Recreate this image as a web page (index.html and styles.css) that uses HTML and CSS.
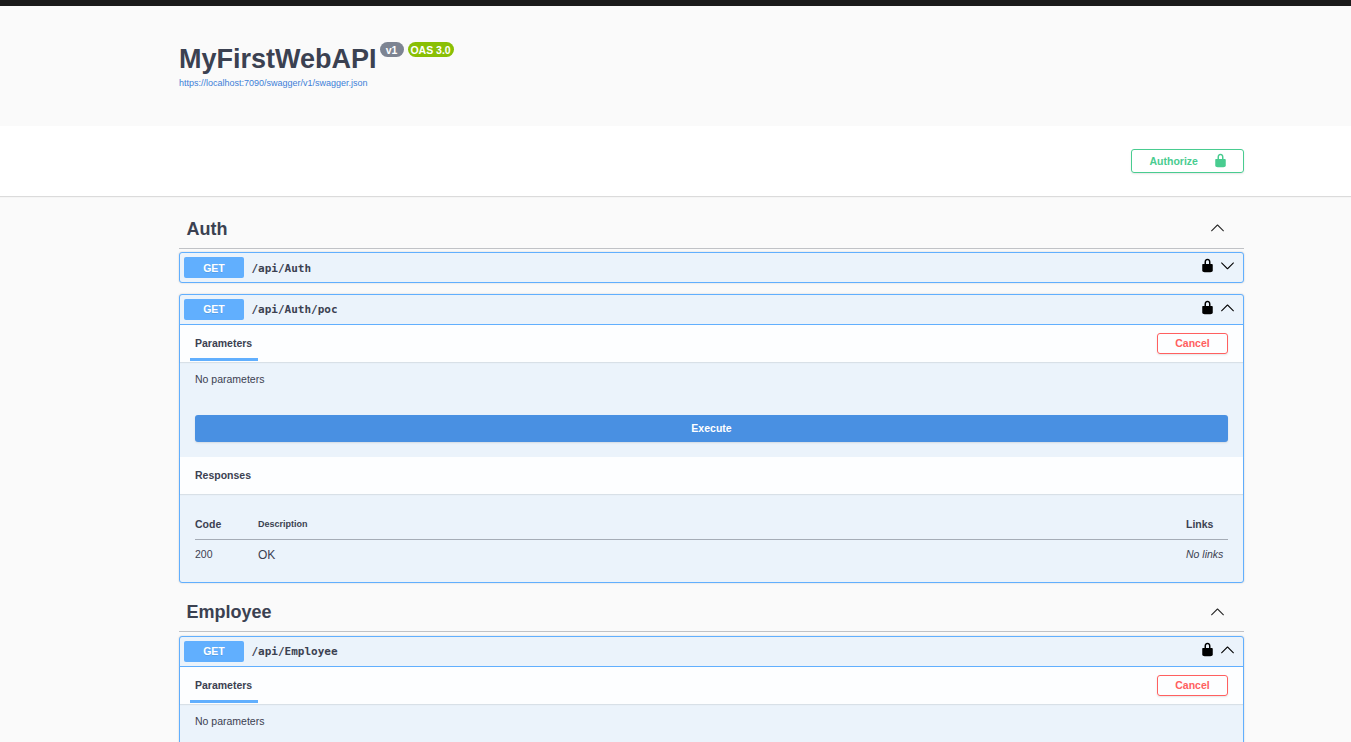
FILE: index.html
```html
<!DOCTYPE html>
<html lang="en">
<head>
<meta charset="utf-8">
<title>MyFirstWebAPI</title>
<link rel="stylesheet" href="styles.css">
</head>
<body>
<svg class="defs" aria-hidden="true">
  <symbol id="lock" viewBox="0 0 20 20"><path d="M15.8 8H14V5.6C14 2.703 12.665 1 10 1 7.334 1 6 2.703 6 5.6V8H4c-.553 0-1 .646-1 1.199V17c0 .549.428 1.139.951 1.307l1.197.387C5.672 18.861 6.55 19 7.1 19h5.8c.549 0 1.428-.139 1.951-.307l1.196-.387c.524-.167.953-.757.953-1.306V9.199C17 8.646 16.352 8 15.8 8zM12 8H8V5.199C8 3.754 8.797 3 10 3c1.203 0 2 .754 2 2.199V8z"/></symbol>
  <symbol id="up" viewBox="0 0 20 20"><path d="M17.418 14.908C17.69 15.176 18.127 15.176 18.397 14.908C18.667 14.64 18.668 14.207 18.397 13.939L10.489 6.109C10.219 5.841 9.782 5.841 9.51 6.109L1.602 13.939C1.332 14.207 1.332 14.64 1.602 14.908C1.873 15.176 2.311 15.176 2.581 14.908L10 7.767L17.418 14.908Z"/></symbol>
  <symbol id="down" viewBox="0 0 20 20"><path d="M17.418 6.109C17.69 5.841 18.127 5.841 18.397 6.109C18.667 6.377 18.668 6.81 18.397 7.078L10.489 14.908C10.219 15.176 9.782 15.176 9.51 14.908L1.602 7.078C1.332 6.81 1.332 6.377 1.602 6.109C1.873 5.841 2.311 5.841 2.581 6.109L10 13.25L17.418 6.109Z"/></symbol>
</svg>
<div class="topbar"></div>
<header class="info wrapper">
  <div class="title-row">
    <h1 class="title">MyFirstWebAPI</h1>
    <span class="badge version">v1</span>
    <span class="badge oas">OAS 3.0</span>
  </div>
  <a class="spec-link">https://localhost:7090/swagger/v1/swagger.json</a>
</header>
<section class="scheme">
  <div class="wrapper scheme-inner">
    <button class="btn authorize"><span>Authorize</span><svg class="icon"><use href="#lock"/></svg></button>
  </div>
</section>
<main class="wrapper">
  <h2 class="tag"><span>Auth</span><svg class="icon"><use href="#up"/></svg></h2>
  <article class="op collapsed">
    <div class="summary"><span class="method">GET</span><code class="path">/api/Auth</code><svg class="icon"><use href="#lock"/></svg><svg class="icon"><use href="#down"/></svg></div>
  </article>
  <article class="op">
    <div class="summary"><span class="method">GET</span><code class="path">/api/Auth/poc</code><svg class="icon"><use href="#lock"/></svg><svg class="icon"><use href="#up"/></svg></div>
    <div class="section-head parameters"><h4 class="tab">Parameters</h4><button class="btn cancel">Cancel</button></div>
    <p class="empty">No parameters</p>
    <div class="execute-wrap"><button class="execute">Execute</button></div>
    <div class="section-head"><h4 class="heading">Responses</h4></div>
    <div class="responses">
      <div class="row head"><span>Code</span><span class="small">Description</span><span>Links</span></div>
      <div class="row"><span>200</span><span class="ok">OK</span><i>No links</i></div>
    </div>
  </article>
  <h2 class="tag employee"><span>Employee</span><svg class="icon"><use href="#up"/></svg></h2>
  <article class="op">
    <div class="summary"><span class="method">GET</span><code class="path">/api/Employee</code><svg class="icon"><use href="#lock"/></svg><svg class="icon"><use href="#up"/></svg></div>
    <div class="section-head parameters"><h4 class="tab">Parameters</h4><button class="btn cancel">Cancel</button></div>
    <p class="empty">No parameters</p>
  </article>
</main>
</body>
</html>
```

FILE: styles.css
```css
* { box-sizing: border-box; }
body {
  margin: 0;
  height: 742px;
  overflow: hidden;
  background: #fafafa;
  color: #3b4151;
  font: 10.5px/14px "Liberation Sans", Arial, sans-serif;
}
h1, h2, h4, p { margin: 0; }
.defs { display: none; }
.wrapper { width: 1065px; margin-left: 179px; }
.topbar { height: 6px; background: #1b1b1b; }
.info { height: 120px; padding-top: 36px; }
.title-row { display: flex; height: 34px; align-items: flex-start; }
.title { font-size: 27px; line-height: 35px; }
.badge {
  height: 15px;
  border-radius: 8px;
  color: #fff;
  font-weight: bold;
  font-size: 10.5px;
  line-height: 16px;
  text-align: center;
}
.version { width: 24px; margin-left: 3px; background: #7d8492; }
.oas { width: 46px; margin-left: 4px; background: #89bf04; }
.spec-link { display: block; color: #4080d8; font-size: 9px; line-height: 14px; }
.scheme { height: 70px; background: #fff; box-shadow: 0 1px 1px rgba(0,0,0,.12); }
.scheme-inner { display: flex; justify-content: flex-end; padding-top: 23px; }
.btn {
  border: 1px solid;
  border-radius: 3px;
  background: transparent;
  box-shadow: 0 1px 2px rgba(0,0,0,.1);
  font: bold 10.5px/14px "Liberation Sans", Arial, sans-serif;
}
.icon { width: 15px; height: 15px; flex: none; fill: currentColor; }
.authorize {
  display: flex;
  align-items: center;
  justify-content: space-between;
  width: 113px;
  height: 24px;
  padding: 0 15px 0 17.5px;
  color: #49cc90;
}
.authorize .icon { margin-top: -1px; }
.tag {
  display: flex;
  align-items: center;
  justify-content: space-between;
  height: 38px;
  margin: 15px 0 3px;
  padding: 0 19px 2px 7.5px;
  border-bottom: 1px solid rgba(59,65,81,.3);
  font-size: 18px;
  line-height: 24px;
}
.tag .icon { margin-bottom: 2px; fill: #222; }
.tag.employee { margin: 0 0 4px; }
.tag.employee .icon { margin-bottom: 0; }
.op {
  margin-bottom: 11px;
  border: 1px solid #61affe;
  border-radius: 3px;
  background: #ebf3fb;
  box-shadow: 0 0 2px rgba(0,0,0,.19);
}
.summary { display: flex; align-items: center; height: 29px; padding: 0 8px 0 4px; }
.method {
  width: 60px;
  height: 21px;
  border-radius: 2px;
  background: #61affe;
  color: #fff;
  font-weight: bold;
  line-height: 20px;
  text-align: center;
  text-shadow: 0 1px 0 rgba(0,0,0,.1);
}
.path { flex: 1; margin-left: 7.5px; font: bold 11px/14px "DejaVu Sans Mono", monospace; }
.collapsed .method { line-height: 22px; }
.collapsed .path { padding-top: 2px; }
.summary .icon { margin: -5px 0 0 5px; fill: #000; }
.section-head {
  display: flex;
  align-items: center;
  justify-content: space-between;
  height: 37px;
  padding: 0 15px;
  background: rgba(255,255,255,.9);
  box-shadow: 0 1px 1px rgba(0,0,0,.08);
}
.section-head.parameters { height: 38px; padding-left: 10px; border-top: 1px solid #61affe; }
.tab { align-self: flex-start; width: 68px; height: 36px; padding: 11px 5px 0; border-bottom: 3px solid #61affe; font-size: 10.5px; }
.heading { padding-bottom: 2px; font-size: 10.5px; }
.cancel { width: 71px; height: 21px; padding: 0 0 2px; color: #ff6060; }
.empty { height: 53px; padding: 10px 15px; }
.execute-wrap { padding: 0 15px 15px; }
.execute {
  display: block;
  width: 100%;
  height: 27px;
  padding: 0 0 2px;
  border: 0;
  border-radius: 3px;
  background: #4990e2;
  box-shadow: 0 1px 2px rgba(0,0,0,.1);
  color: #fff;
  font: bold 10.5px/14px "Liberation Sans", Arial, sans-serif;
}
.responses { height: 88px; padding: 15px; }
.row { display: grid; grid-template-columns: 63px 1fr 42px; align-items: center; height: 28px; white-space: nowrap; }
.row.head { height: 31px; border-bottom: 1px solid rgba(59,65,81,.4); font-weight: bold; }
.small { font-size: 9px; }
.ok { padding-top: 1px; font-size: 12px; }
```
